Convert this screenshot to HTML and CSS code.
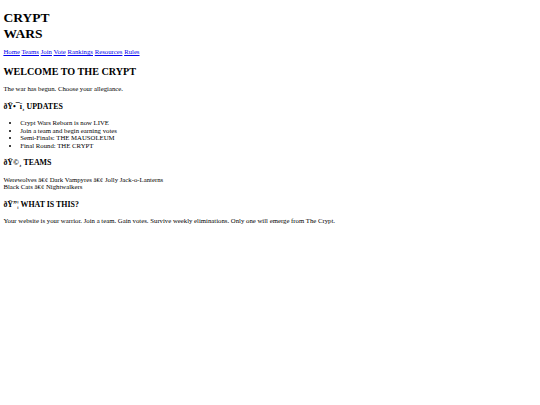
FILE: index.html
```html
<!DOCTYPE html>
<html lang="en">
<head>
<meta charset="utf-8">
<title>Crypt Wars</title>
<link rel="stylesheet" href="styles.css">
</head>
<body class="page">
<header class="site-header">
<h1 class="logo">CRYPT WARS</h1>
<nav class="nav"><a href="#">Home</a> <a href="#">Teams</a> <a href="#">Join</a> <a href="#">Vote</a> <a href="#">Rankings</a> <a href="#">Resources</a> <a href="#">Rules</a></nav>
</header>
<main>
<h2 class="title">WELCOME TO THE CRYPT</h2>
<p class="text">The war has begun. Choose your allegiance.</p>
<h3 class="section">ðŸ•¯ï¸ UPDATES</h3>
<ul class="list">
<li>Crypt Wars Reborn is now LIVE</li>
<li>Join a team and begin earning votes</li>
<li>Semi-Finals: THE MAUSOLEUM</li>
<li>Final Round: THE CRYPT</li>
</ul>
<h3 class="section">ðŸ©¸ TEAMS</h3>
<p class="text">Werewolves â€¢ Dark Vampyres â€¢ Jolly Jack-o-Lanterns<br>Black Cats â€¢ Nightwalkers</p>
<h3 class="section">ðŸ”¦ WHAT IS THIS?</h3>
<p class="text">Your website is your warrior. Join a team. Gain votes. Survive weekly eliminations. Only one will emerge from The Crypt.</p>
</main>
</body>
</html>
```

FILE: styles.css
```css
html { background: #fff; }
.page {
  margin: 3.4px;
  font-family: "Liberation Serif", "Times New Roman", serif;
  font-size: 6.75px;
  line-height: 7.5px;
  color: #000;
}
.logo {
  width: min-content;
  font-size: 13.5px;
  line-height: 16px;
  margin: 6.2px 0 6.8px;
}
.nav a { color: #0000ee; }
.title {
  font-size: 10.125px;
  line-height: 11.1px;
  margin: 9.8px 0 8.2px;
}
.section {
  font-size: 7.9px;
  line-height: 8.7px;
  margin: 10.4px 0 7.5px;
}
.text { margin: 7.2px 0; }
.list { margin: 7.5px 0; padding-left: 16.8px; }
```
